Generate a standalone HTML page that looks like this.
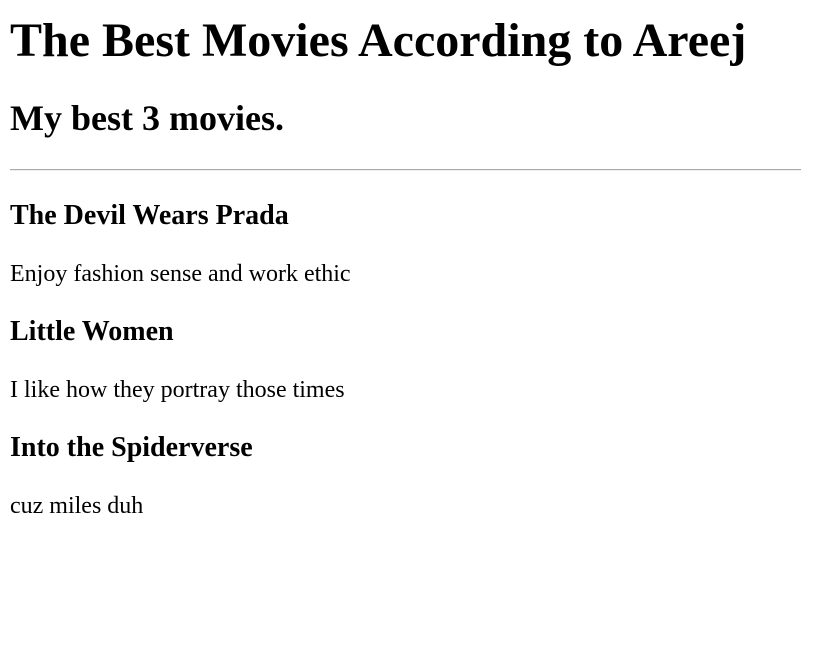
<!DOCTYPE html>
<html><head><meta charset="utf-8"><style>
html,body{background:#fff;}
body{margin:10px;font-family:"Liberation Serif",serif;font-size:24px;color:#000;}
h1{font-size:48px;margin:13px 0 30px;font-weight:bold;line-height:55px;}
h2{font-size:36px;margin:0 0 30px;font-weight:bold;line-height:41px;}
h3{font-size:28px;margin:28px 0;font-weight:bold;line-height:32px;}
p{margin:24px 0;line-height:28px;}
hr{width:791px;margin:0 0 29px;border:none;border-top:1px solid #aaa;border-bottom:1px solid #eee;height:0;}
hr + h3{margin-top:0;}
</style></head><body>
<h1>The Best Movies According to Areej</h1>
<h2>My best 3 movies.</h2>
<hr>
<h3>The Devil Wears Prada</h3>
<p>Enjoy fashion sense and work ethic</p>
<h3>Little Women</h3>
<p>I like how they portray those times</p>
<h3>Into the Spiderverse</h3>
<p>cuz miles duh</p>
</body></html>
